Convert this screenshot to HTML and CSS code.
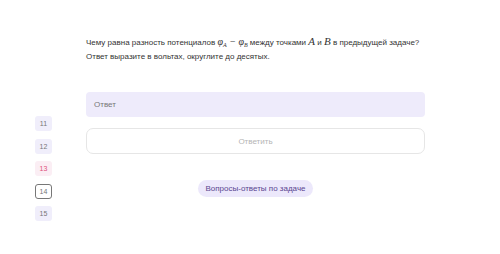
FILE: index.html
```html
<!DOCTYPE html>
<html lang="ru">
<head>
<meta charset="utf-8">
<link rel="stylesheet" href="styles.css">
</head>
<body>
<div class="page">
  <nav class="steps">
    <div class="step">11</div>
    <div class="step">12</div>
    <div class="step step-wrong">13</div>
    <div class="step step-current">14</div>
    <div class="step">15</div>
  </nav>
  <main class="main">
    <p class="question">Чему равна разность потенциалов <span class="math">φ<sub>A</sub> − φ<sub>B</sub></span> между точками <span class="math big">A</span> и <span class="math big">B</span> в предыдущей задаче?<br>Ответ выразите в вольтах, округлите до десятых.</p>
    <div class="answer">Ответ</div>
    <button class="submit">Ответить</button>
    <div class="qa-row"><span class="qa">Вопросы-ответы по задаче</span></div>
  </main>
</div>
</body>
</html>
```
FILE: styles.css
```css
html, body { margin: 0; padding: 0; background: #fff; }
body { font-family: "Liberation Sans", Arial, sans-serif; color: #333; width: 500px; height: 254px; overflow: hidden; }
.page { display: flex; padding-left: 35px; gap: 34px; }
.steps { display: flex; flex-direction: column; gap: 7.5px; padding-top: 116px; }
.step { width: 17px; height: 15px; box-sizing: border-box; border-radius: 3px; background: #f0eefb; color: #777; font-size: 7px; display: flex; align-items: center; justify-content: center; }
.step-wrong { background: #fbeef4; color: #e0507a; }
.step-current { background: #fff; border: 1px solid #777; }
.main { width: 339px; padding-top: 34px; }
.question { margin: 0; font-size: 8px; line-height: 14px; color: #333; white-space: nowrap; }
.math { font-family: "Liberation Serif", "DejaVu Serif", serif; font-style: italic; font-size: 10px; }
.math sub { font-size: 6px; vertical-align: -2px; line-height: 0; }
.math.big { font-size: 11px; }
.answer { margin-top: 28px; height: 25px; box-sizing: border-box; background: #eeebfb; border-radius: 4px; padding-left: 8px; font-size: 8px; color: #777; display: flex; align-items: center; }
.submit { display: block; margin-top: 11px; width: 100%; height: 26px; background: #fff; border: 1px solid #e6e6e6; border-radius: 7px; font-family: inherit; font-size: 8px; color: #b5b5b5; }
.qa-row { display: flex; justify-content: center; margin-top: 26px; }
.qa { background: #ece8fb; color: #5a4690; font-size: 8px; height: 17px; padding: 0 7px; border-radius: 9px; display: flex; align-items: center; }
```
